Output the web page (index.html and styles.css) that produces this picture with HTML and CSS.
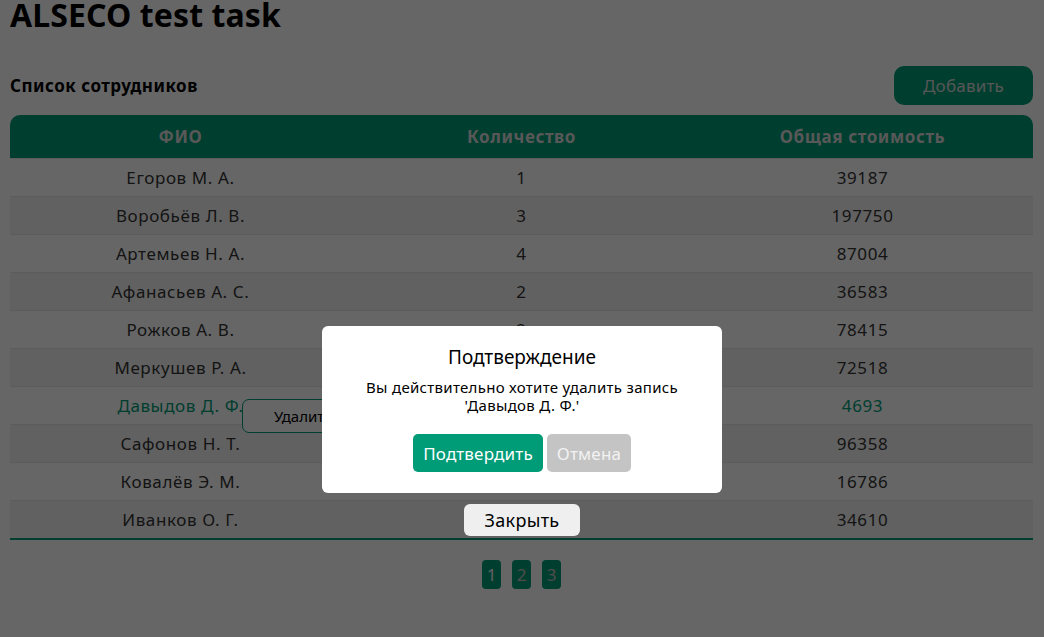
FILE: index.html
```html
<!DOCTYPE html>
<html lang="ru">
<head>
<meta charset="utf-8">
<title>ALSECO test task</title>
<link rel="stylesheet" href="styles.css">
</head>
<body>
<div class="page">
  <h1 class="title">ALSECO test task</h1>
  <div class="toolbar">
    <h2 class="subtitle">Список сотрудников</h2>
    <button class="btn-add">Добавить</button>
  </div>
  <div class="table">
    <div class="thead">
      <div class="cell">ФИО</div>
      <div class="cell">Количество</div>
      <div class="cell">Общая стоимость</div>
    </div>
    <div class="row"><div class="cell">Егоров М. А.</div><div class="cell">1</div><div class="cell">39187</div></div>
    <div class="row"><div class="cell">Воробьёв Л. В.</div><div class="cell">3</div><div class="cell">197750</div></div>
    <div class="row"><div class="cell">Артемьев Н. А.</div><div class="cell">4</div><div class="cell">87004</div></div>
    <div class="row"><div class="cell">Афанасьев А. С.</div><div class="cell">2</div><div class="cell">36583</div></div>
    <div class="row"><div class="cell">Рожков А. В.</div><div class="cell">2</div><div class="cell">78415</div></div>
    <div class="row"><div class="cell">Меркушев Р. А.</div><div class="cell">3</div><div class="cell">72518</div></div>
    <div class="row row-active"><div class="cell">Давыдов Д. Ф.</div><div class="cell">1</div><div class="cell">4693</div></div>
    <div class="row"><div class="cell">Сафонов Н. Т.</div><div class="cell">2</div><div class="cell">96358</div></div>
    <div class="row"><div class="cell">Ковалёв Э. М.</div><div class="cell">1</div><div class="cell">16786</div></div>
    <div class="row"><div class="cell">Иванков О. Г.</div><div class="cell">2</div><div class="cell">34610</div></div>
  </div>
  <div class="pager">
    <button class="page-btn active">1</button>
    <button class="page-btn">2</button>
    <button class="page-btn">3</button>
  </div>
</div>

<button class="btn-delete">Удалить</button>

<div class="overlay"></div>

<div class="modal">
  <div class="modal-title">Подтверждение</div>
  <div class="modal-text">Вы действительно хотите удалить запись<br>'Давыдов Д. Ф.'</div>
  <div class="modal-actions">
    <button class="btn-confirm">Подтвердить</button>
    <button class="btn-cancel">Отмена</button>
  </div>
</div>

<button class="btn-close">Закрыть</button>
</body>
</html>
```

FILE: styles.css
```css
* { box-sizing: border-box; }

body {
  margin: 0;
  font-family: "Noto Sans", "Open Sans", sans-serif;
  color: #333;
  background: #fff;
}

.page {
  padding: 0 11px 0 10px;
}

.title {
  margin: 0;
  font-size: 32px;
  line-height: 36px;
  font-weight: 700;
  color: #000;
  margin-top: -3px;
  letter-spacing: 0.1px;
}

.toolbar {
  display: flex;
  justify-content: space-between;
  align-items: center;
  margin-top: 33px;
}

.subtitle {
  margin: 0;
  font-size: 17px;
  font-weight: 700;
  color: #000;
  letter-spacing: 0.5px;
}

.btn-add {
  width: 139px;
  height: 39px;
  border: none;
  border-radius: 10px;
  background: #009b77;
  color: #d8d8d8;
  font-family: inherit;
  font-size: 17px;
  letter-spacing: 0.2px;
}

.table {
  margin-top: 10px;
  border-bottom: 2px solid #009b77;
}

.thead, .row {
  display: grid;
  grid-template-columns: 1fr 1fr 1fr;
}

.thead {
  height: 43px;
  background: #009b77;
  border-radius: 10px 10px 0 0;
  color: #dcdcdc;
  font-weight: 700;
  font-size: 17px;
  letter-spacing: 0.6px;
  align-items: center;
}

.cell {
  text-align: center;
}

.row {
  height: 38px;
  align-items: center;
  font-size: 17px;
  letter-spacing: 0.6px;
  color: #333;
  border-top: 1px solid #e6e6e6;
}

.row:first-of-type { border-top: none; }

.row:nth-child(odd) {
  background: #f3f3f3;
}

.row-active {
  color: #009b77;
}

.pager {
  display: flex;
  justify-content: center;
  gap: 11px;
  margin-top: 20px;
}

.page-btn {
  width: 19px;
  height: 29px;
  padding: 0;
  border: none;
  border-radius: 4px;
  background: #009b77;
  color: #c0c0c0;
  font-family: inherit;
  font-size: 17px;
}

.page-btn.active { color: #f0f0f0; }

.btn-delete {
  position: absolute;
  left: 242px;
  top: 399px;
  width: 120px;
  height: 34px;
  border: 1px solid #009b77;
  border-radius: 7px;
  background: #fff;
  color: #000;
  font-family: inherit;
  font-size: 15px;
  text-align: left;
  padding-left: 31px;
}

.overlay {
  position: fixed;
  inset: 0;
  background: rgba(0, 0, 0, 0.6);
}

.modal {
  position: absolute;
  left: 322px;
  top: 326px;
  width: 400px;
  height: 167px;
  background: #fff;
  border-radius: 6px;
  text-align: center;
  color: #000;
  padding-top: 18px;
}

.modal-title {
  font-size: 19px;
  line-height: 26px;
}

.modal-text {
  margin-top: 8px;
  font-size: 15px;
  line-height: 18px;
  letter-spacing: 0.3px;
}

.modal-actions {
  display: flex;
  justify-content: center;
  gap: 4px;
  margin-top: 20px;
  padding-left: 0;
}

.btn-confirm, .btn-cancel {
  height: 38px;
  border: none;
  border-radius: 5px;
  font-family: inherit;
  font-size: 17px;
  padding: 0;
  letter-spacing: 0.2px;
}

.btn-confirm {
  width: 130px;
  background: #009b77;
  color: #fff;
}

.btn-cancel {
  width: 84px;
  background: #c4c4c4;
  color: #f2f2f2;
}

.btn-close {
  position: absolute;
  left: 464px;
  top: 504px;
  width: 116px;
  height: 32px;
  border: none;
  border-radius: 6px;
  background: #efefef;
  color: #000;
  font-family: inherit;
  font-size: 18px;
  letter-spacing: 0.3px;
  padding: 0;
}
```
